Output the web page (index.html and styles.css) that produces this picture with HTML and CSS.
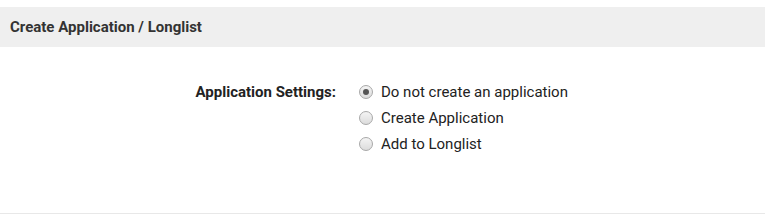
FILE: index.html
```html
<!DOCTYPE html>
<html>
<head>
<meta charset="utf-8">
<link rel="stylesheet" href="styles.css">
</head>
<body>
<div class="panel">
  <div class="panel-header">Create Application / Longlist</div>
  <div class="panel-body">
    <div class="form-row">
      <div class="form-label">Application Settings:</div>
      <div class="options">
        <label class="option"><span class="radio checked"></span>Do not create an application</label>
        <label class="option"><span class="radio"></span>Create Application</label>
        <label class="option"><span class="radio"></span>Add to Longlist</label>
      </div>
    </div>
  </div>
</div>
</body>
</html>
```
FILE: styles.css
```css
html, body {
  margin: 0;
  padding: 0;
  background: #fff;
}
body {
  font-family: Roboto, "Liberation Sans", sans-serif;
  color: #222;
  padding-top: 7px;
}
.panel {
  height: 207px;
  border-bottom: 1px solid #e8e8e8;
  box-sizing: border-box;
}
.panel-header {
  background: #efefef;
  height: 40px;
  line-height: 40px;
  padding-left: 10px;
  font-size: 15px;
  font-weight: 700;
  color: #333;
}
.panel-body {
  padding-top: 32px;
}
.form-row {
  display: grid;
  grid-template-columns: 336px 1fr;
  column-gap: 23px;
}
.form-label {
  text-align: right;
  font-size: 15px;
  font-weight: 700;
  line-height: 26px;
  color: #222;
}
.options {
  display: flex;
  flex-direction: column;
}
.option {
  display: flex;
  align-items: center;
  height: 26px;
  font-size: 15px;
  color: #222;
}
.radio {
  width: 14px;
  height: 14px;
  border-radius: 50%;
  box-sizing: border-box;
  border: 1px solid #a8a8a8;
  background: linear-gradient(#f4f4f4, #dcdcdc);
  margin-right: 8px;
  position: relative;
  flex: none;
}
.radio.checked::after {
  content: "";
  position: absolute;
  left: 3px;
  top: 3px;
  width: 6px;
  height: 6px;
  border-radius: 50%;
  background: #555;
}
```
